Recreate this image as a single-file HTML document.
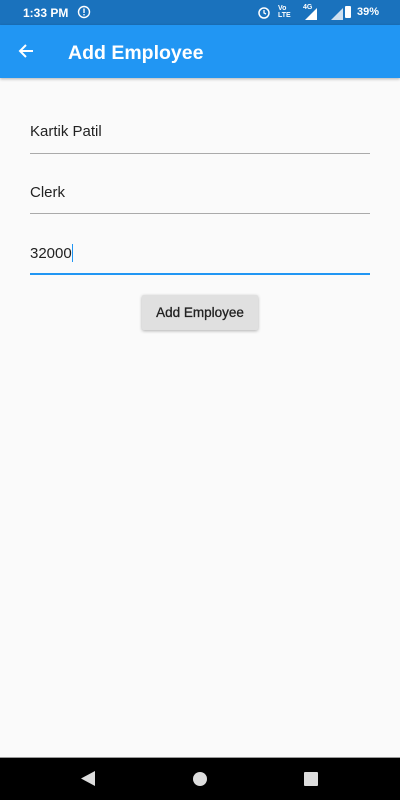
<!DOCTYPE html>
<html><head><meta charset="utf-8"><style>
*{margin:0;padding:0;box-sizing:border-box}
body{width:400px;height:800px;background:#fafafa;font-family:"Liberation Sans",sans-serif;position:relative;overflow:hidden}
.sb{position:absolute;top:0;left:0;width:400px;height:25px;background:#1a72bd;color:#fff;font-size:12px;font-weight:bold}
.ab{position:absolute;top:25px;left:0;width:400px;height:53px;background:#2196f3;box-shadow:0 1px 3px rgba(0,0,0,.3)}
.title{position:absolute;left:68px;top:17px;color:#fff;font-size:19.5px;font-weight:bold}
.f{position:absolute;left:30px;width:340px;font-size:15px;color:#222}
.ln{position:absolute;left:30px;width:340px;height:1px;background:#aaa}
.btn{position:absolute;left:142px;top:295px;width:116px;height:35px;background:#e0e0e0;border-radius:2px;box-shadow:0 1px 3px rgba(0,0,0,.3);font-size:13.5px;color:#222;text-align:center;line-height:35px;-webkit-text-stroke:0.3px #222}
.nav{position:absolute;top:758px;left:0;width:400px;height:42px;background:#000}
</style></head><body>
<div class="sb">
<span style="position:absolute;left:23px;top:6px">1:33 PM</span>
<svg style="position:absolute;left:77px;top:5px" width="14" height="14" viewBox="0 0 14 14"><circle cx="7" cy="7" r="5.5" fill="none" stroke="#fff" stroke-width="1.4"/><rect x="6.3" y="3.5" width="1.4" height="4.5" fill="#fff"/><rect x="6.3" y="9" width="1.4" height="1.4" fill="#fff"/></svg>
<svg style="position:absolute;left:257px;top:5px" width="14" height="14" viewBox="0 0 14 14"><circle cx="7" cy="8" r="5" fill="none" stroke="#fff" stroke-width="1.5"/><path d="M7 5v3l2 1" stroke="#fff" fill="none" stroke-width="1.3"/></svg>
<span style="position:absolute;left:278px;top:5px;font-size:7px">Vo<br>LTE</span>
<span style="position:absolute;left:303px;top:4px;font-size:7px">4G</span>
<svg style="position:absolute;left:305px;top:8px" width="13" height="12"><path d="M0 12L12 0V12Z" fill="#fff"/></svg>
<svg style="position:absolute;left:331px;top:8px" width="12" height="12"><path d="M0 12L12 0V12Z" fill="#cfe0f0"/></svg>
<div style="position:absolute;left:345px;top:6px;width:6px;height:12px;background:#fff;border-radius:1px"></div>
<span style="position:absolute;left:357px;top:6px;font-size:11px">39%</span>
</div>
<div class="ab">
<svg style="position:absolute;left:18px;top:18px" width="16" height="16" viewBox="0 0 16 16"><path d="M15 8H2M8 2L2 8l6 6" stroke="#fff" stroke-width="2" fill="none"/></svg>
<div class="title">Add Employee</div>
</div>
<div class="f" style="top:123px">Kartik Patil</div>
<div class="ln" style="top:153px"></div>
<div class="f" style="top:184px">Clerk</div>
<div class="ln" style="top:213px"></div>
<div class="f" style="top:244px">32000<span style="display:inline-block;width:1px;height:18px;background:#2196f3;vertical-align:-4px"></span></div>
<div class="ln" style="top:273px;height:2px;background:#2196f3"></div>
<div class="btn">Add Employee</div>
<div style="position:absolute;top:757px;left:0;width:400px;height:1px;background:#999"></div>
<div class="nav">
<svg style="position:absolute;left:81px;top:13px" width="15" height="15"><path d="M14 0V15L0 7.5Z" fill="#ddd"/></svg>
<div style="position:absolute;left:193px;top:14px;width:14px;height:14px;border-radius:50%;background:#ddd"></div>
<div style="position:absolute;left:304px;top:14px;width:14px;height:14px;background:#ddd;border-radius:1px"></div>
</div>
</body></html>
